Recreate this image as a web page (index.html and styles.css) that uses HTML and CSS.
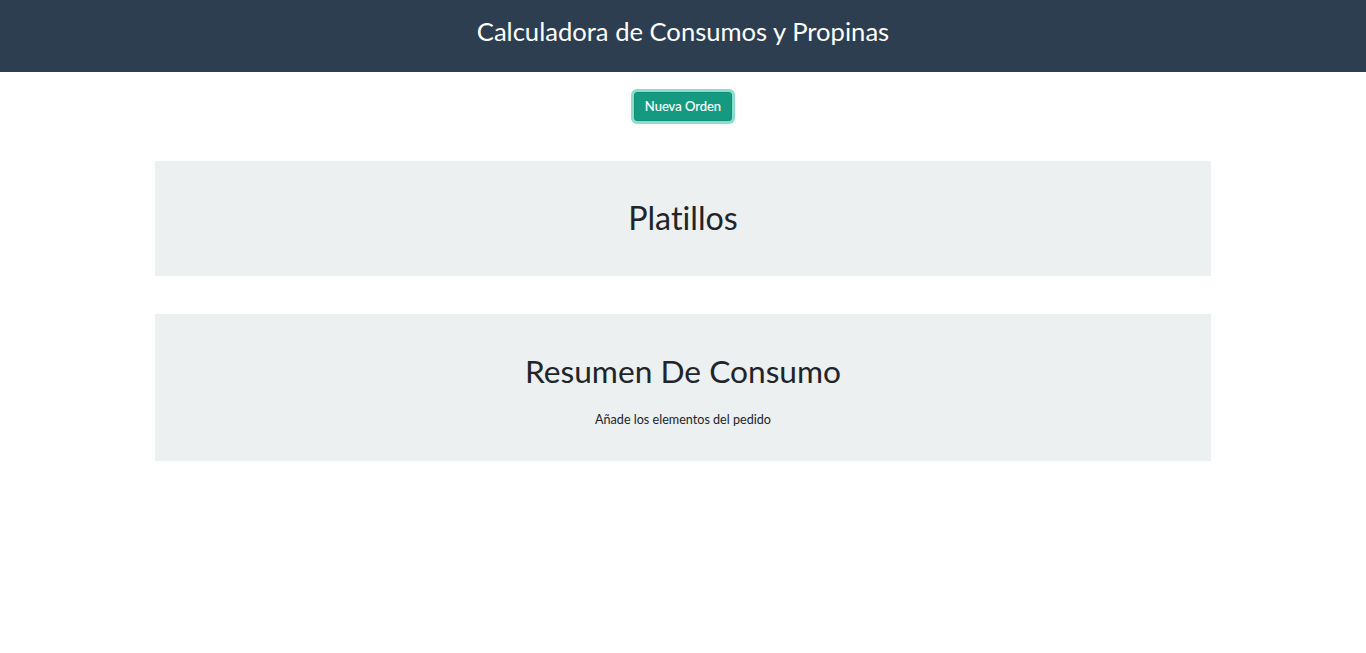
FILE: index.html
```html
<!DOCTYPE html>
<html lang="es">
<head>
<meta charset="utf-8">
<title>Calculadora de Consumos y Propinas</title>
<link rel="stylesheet" href="styles.css">
</head>
<body>
<header class="header">
  <h1 class="header-title">Calculadora de Consumos y Propinas</h1>
</header>
<main class="main">
  <div class="actions">
    <button class="btn-order" type="button">Nueva Orden</button>
  </div>
  <section class="panel panel-dishes">
    <h2 class="panel-title">Platillos</h2>
  </section>
  <section class="panel panel-summary">
    <h2 class="panel-title">Resumen De Consumo</h2>
    <p class="panel-text">Añade los elementos del pedido</p>
  </section>
</main>
</body>
</html>
```
FILE: styles.css
```css
* { box-sizing: border-box; }
html, body { margin: 0; padding: 0; }
body {
  font-family: Lato, "Open Sans", sans-serif;
  color: #212529;
  background: #fff;
  font-size: 15px;
  font-variant-ligatures: none;
}
.header {
  background: #2c3e50;
  height: 72px;
  display: flex;
  justify-content: center;
  padding-top: 13px;
}
.header-title {
  margin: 0;
  color: #fff;
  font-size: 25.6px;
  font-weight: 400;
  line-height: 36px;
}
.main {
  width: 1056px;
  margin: 0 auto;
}
.actions {
  display: flex;
  justify-content: center;
  padding-top: 20px;
}
.btn-order {
  font-family: Lato, sans-serif;
  font-variant-ligatures: none;
  font-size: 13px;
  color: #fff;
  background: #149a80;
  border: 1px solid #128f76;
  border-radius: 3px;
  height: 29px;
  padding: 0 10px 2px;
  box-shadow: 0 0 0 3px #8cddcd;
  cursor: pointer;
  -webkit-text-stroke: 0.15px #fff;
}
.panel {
  background: #ecf0f1;
  text-align: center;
}
.panel-dishes {
  margin-top: 40px;
  height: 115px;
  padding-top: 37px;
}
.panel-summary {
  margin-top: 38px;
  height: 147px;
  padding-top: 37px;
}
.panel-title {
  margin: 0;
  font-size: 32.3px;
  font-weight: 400;
  line-height: 40px;
}
.panel-summary .panel-title {
  font-size: 31.7px;
}
.panel-text {
  margin: 19px 0 0;
  font-size: 12.6px;
  line-height: 20px;
}
```
